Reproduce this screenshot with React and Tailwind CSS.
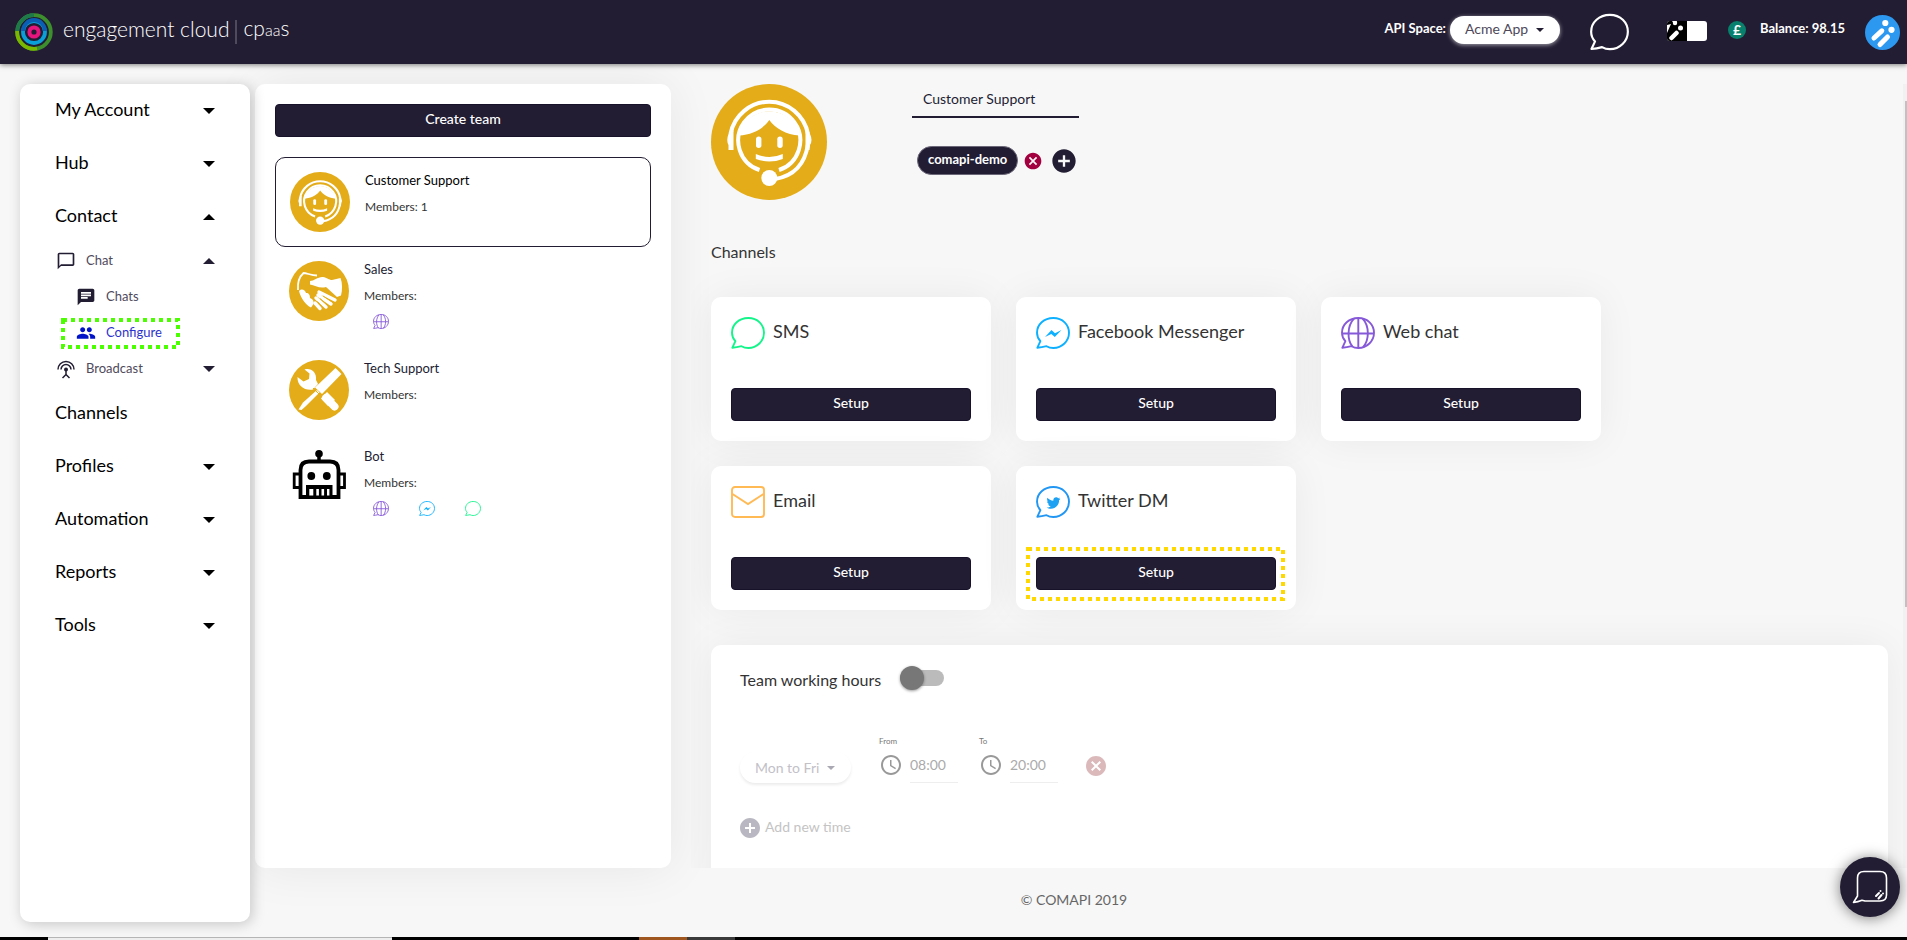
import React, { useState } from 'react'
import clsx from 'clsx'
import { FaTwitter } from 'react-icons/fa'
import {
  MdAccessTime,
  MdAddCircle,
  MdCancel,
  MdChat,
  MdChatBubbleOutline,
  MdPeople,
} from 'react-icons/md'

const BUBBLE =
  'M1.3 30.8 L4.4 24.2 C2.2 21.8 1 19 1 15.7 C1 7.6 8 1 17.3 1 S33 7.6 33 15.8 S26 31 17.3 31 C14.8 31 12.4 30.3 10.5 29.2 C7.5 30 4 30.6 1.3 30.8Z'

const Arrow = ({ up, className }) => (
  <svg viewBox="0 0 12 6" className={className} fill="currentColor" aria-hidden="true">
    <path d={up ? 'M0 6 L6 0 L12 6Z' : 'M0 0 L6 6 L12 0Z'} />
  </svg>
)

// Channel icons
const Bubble = ({ className, children }) => (
  <svg viewBox="0 0 34 32" className={className} fill="none" stroke="currentColor" strokeWidth="1.9" strokeLinejoin="round" aria-hidden="true">
    <path d={BUBBLE} />
    {children}
  </svg>
)

const ChannelIcon = ({ type, size }) => {
  const box = size === 'small' ? 'w-4 h-[15px] shrink-0' : 'w-[34px] h-8 shrink-0'
  if (type === 'sms') return <Bubble className={clsx(box, 'text-[#13f58a]')} />
  if (type === 'facebook') {
    return (
      <Bubble className={clsx(box, 'text-[#0cb0ff]')}>
        <path d="M9 20 L15.5 13 L19 16.2 L25.5 13 L18.8 20 L15.3 17Z" fill="currentColor" stroke="none" />
      </Bubble>
    )
  }
  if (type === 'webchat') {
    return (
      <Bubble className={clsx(box, 'text-[#8659d8]')}>
        <path d="M17.3 1V31M1 16.5H33M13 1.7C6 9 6 23 11.5 29.7M21.6 1.7C28.5 9 28.5 23 22 30.2" />
      </Bubble>
    )
  }
  if (type === 'email') {
    return (
      <svg viewBox="0 0 34 32" className={clsx(box, 'text-[#ffba55]')} fill="none" stroke="currentColor" strokeWidth="1.9" aria-hidden="true">
        <rect x="1" y="1" width="32" height="30" rx="3" />
        <path d="M1.5 8 L17 18 L32.5 8" />
      </svg>
    )
  }
  return (
    <Bubble className={clsx(box, 'text-[#2196f3]')}>
      <FaTwitter x="10.5" y="10" size="14" stroke="none" color="#1da1f2" />
    </Bubble>
  )
}

// Team avatars
const SupportAvatar = ({ className }) => (
  <svg viewBox="0 0 116 116" className={className} aria-hidden="true">
    <circle cx="58" cy="58" r="58" fill="#e3ac18" />
    <g fill="none" stroke="#fff" strokeWidth="4">
      <path d="M19.5 50 A39.5 40 0 0 1 97 50" />
      <path d="M97 60 C94 80 83 92 64 95" />
      <path d="M48.5 86 A31 31 0 1 1 68 86" />
    </g>
    <path d="M28 51.5 C42 51 53 44 58.3 36 C64 44 75 51 88.5 51.5 A31 31 0 0 0 28 51.5Z" fill="#fff" />
    <g fill="#fff">
      <path d="M22.5 66 H17.5 V61 Q15 56.5 17.5 50 Q19 46.5 22.5 46.5Z" />
      <path d="M94.5 66 H98.5 L99 61 Q102 56.5 99 50 Q98 46.5 94.5 46.5Z" />
      <rect x="45" y="52.5" width="5.4" height="11.5" rx="2.7" />
      <rect x="66.3" y="52.5" width="5.4" height="11.5" rx="2.7" />
      <path d="M44.8 70 Q58.3 76 71.8 70 V75 Q58.3 80 44.8 75Z" />
      <circle cx="58.3" cy="94" r="8" />
    </g>
  </svg>
)

const SalesAvatar = ({ className }) => (
  <svg viewBox="0 0 60 60" className={className} aria-hidden="true">
    <circle cx="30" cy="30" r="30" fill="#e3ac18" />
    <path d="M21 20 C25 20 29 15.5 34 16 C38 16.5 40 19 43 19 L51.5 17 C53.5 22 53.5 29 52 34.5 L48 36 L37 26 C31 28 26 24.5 21 23.5Z" fill="#fff" />
    <path d="M9 29 C8.5 23 10 16 14.5 12 C18 12 22 14.5 28 14.5" fill="none" stroke="#fff" strokeWidth="1.8" />
    <path d="M10 30 C13 27 16 29 17 32 C20 32 21 34 21 37 C24 38 25 40 24.5 43 L22 46.5 C17 44 12 38 10 30Z" fill="#fff" />
    <path d="M30 31 L46 39 M29 34 L42 43 M27 37 L37 46 M26 42 L31 47.5" fill="none" stroke="#fff" strokeWidth="3.4" strokeLinecap="round" />
    <path d="M34 35 L45 42 M31 37.5 L40 45.5 M28.5 40.5 L34.5 47.5" fill="none" stroke="#e3ac18" strokeWidth="1" />
  </svg>
)

const TechAvatar = ({ className }) => (
  <svg viewBox="0 0 60 60" className={className} aria-hidden="true">
    <circle cx="30" cy="30" r="30" fill="#e3ac18" />
    <path d="M8.5 17 L14.5 21.5 L20 19 L20.5 13.5 L15.5 9.5 C22 7.5 28 12.5 27 20 L29 24 L24 29.5 C16 31 8 26 8.5 17Z" fill="#fff" />
    <path d="M37 38 L45.5 46.5" stroke="#fff" strokeWidth="8" strokeLinecap="round" />
    <path d="M32 38.5 L38 32 L46 40 L39 46Z" fill="#fff" />
    <path d="M46.5 8 L52.5 14 L33 34 L26 27.5Z" fill="#fff" />
    <path d="M28 30 L30.5 32.5 L17 46 L12.5 50 L9.5 49.5 L14 42.5Z" fill="#fff" />
    <path d="M24 28 L32 36" stroke="#e3ac18" strokeWidth="1" />
  </svg>
)

const BotAvatar = ({ className }) => (
  <svg viewBox="0 0 60 60" className={className} aria-hidden="true">
    <circle cx="30" cy="5.7" r="3.8" />
    <path d="M30 6V14" stroke="#000" strokeWidth="3.5" />
    <path d="M11.5 49 V22 Q11.5 13.5 20 13.5 H41 Q49.5 13.5 49.5 22 V49Z" fill="none" stroke="#000" strokeWidth="3.8" />
    <path d="M10 26 H5.2 V39.5 H10 M51 26 H55.5 V39.5 H51" fill="none" stroke="#000" strokeWidth="2.8" />
    <circle cx="22.3" cy="28" r="3.9" />
    <circle cx="37.8" cy="28" r="3.9" />
    <path d="M17 37H43.5V50H17Z" />
    <path d="M20.3 41h4v6.5h-4zM27.3 41h2.6v6.5h-2.6zM32.5 41h2.6v6.5h-2.6zM38 41h2.4v6.5h-2.4z" fill="#fff" />
  </svg>
)

const Capsules = ({ dot }) => (
  <>
    <path d="M9 23 L16.8 15.8 M15 29.5 L22.5 22" stroke="currentColor" strokeWidth="5" strokeLinecap="round" />
    <circle cx="20.3" cy="8" r={dot} fill="currentColor" />
    <circle cx="26.5" cy="14.8" r={dot} fill="currentColor" />
  </>
)

const BroadcastIcon = () => (
  <svg viewBox="0 0 20 20" className="w-5 h-5" fill="none" stroke="currentColor" strokeWidth="1.5" aria-hidden="true">
    <path d="M2 10.5 A8 8 0 0 1 18 10.5 M5 10.5 A5 5 0 0 1 15 10.5" />
    <circle cx="10" cy="10.5" r="2" fill="currentColor" stroke="none" />
    <path d="M10 12 V16 M6.5 19 L10 15.5 L13.5 19" />
  </svg>
)

// Dotted marker drawn around a control
const Marker = ({ className }) => (
  <svg className={clsx('absolute pointer-events-none overflow-visible', className)} fill="none" stroke="currentColor" strokeWidth="4" strokeDasharray="4 4" aria-hidden="true">
    <rect width="100%" height="100%" />
  </svg>
)

const DarkButton = ({ children }) => (
  <button className="w-full h-[33px] pb-1 rounded bg-[#231d33] border border-[#17112a] text-white text-sm font-medium">
    {children}
  </button>
)

const Header = () => (
  <header className="relative z-20 flex items-center h-16 pl-[15px] pr-[7px] shrink-0 bg-[#231d33] text-white shadow-[0_1px_5px_rgba(0,0,0,0.5)]">
    <svg viewBox="0 0 38 38" className="w-[38px] h-[38px]" fill="none" aria-hidden="true">
      <circle cx="19" cy="19" r="16.8" stroke="#3c8f2c" strokeWidth="3.8" />
      <path d="M2.2 18 A16.8 16.8 0 0 1 19 2.2" stroke="#1f7a4a" strokeWidth="3.8" />
      <path d="M2.2 18 A16.8 16.8 0 0 0 22 35.5" stroke="#7ab800" strokeWidth="3.8" />
      <circle cx="19" cy="19" r="11" stroke="#0a9fd8" strokeWidth="3.8" />
      <path d="M8 18 A11 11 0 0 1 30 18" stroke="#0a5fb4" strokeWidth="3.8" />
      <circle cx="19" cy="19" r="4.6" stroke="#e6147d" strokeWidth="4" />
    </svg>
    <h1 className="flex items-center ml-[10px] text-[21px] leading-6 font-light">
      <span className="pb-[6px]">engagement cloud</span>
      <span className="w-[2px] h-6 mx-[6px] bg-[#4f4a5c]" />
      <span className="pb-[6px]">cp<span className="text-base">aa</span>s</span>
    </h1>
    <div className="flex items-center ml-auto text-[13px] font-bold">
      <label htmlFor="api-space" className="pb-[6px]">API Space:</label>
      <div className="relative ml-1 mb-1">
        <select id="api-space" className="appearance-none w-[110px] h-7 pl-[15px] pb-[2px] rounded-full bg-white text-[#4d485a] text-sm font-normal shadow-[0_1px_4px_rgba(255,255,255,0.6)]">
          <option>Acme App</option>
        </select>
        <Arrow className="absolute right-4 top-3 w-2 h-1 text-[#231d33] pointer-events-none" />
      </div>
      <button aria-label="Messages" className="ml-[30px]"><Bubble className="w-[39px] h-[38px]" /></button>
      <svg viewBox="0 0 40 20" className="w-10 h-5 ml-[38px] mb-[2px]" aria-hidden="true">
        <rect width="40" height="20" rx="3" fill="#fff" />
        <path d="M3 0H20V20H3Q0 20 0 17V3Q0 0 3 0Z" fill="#000" />
        <path d="M4.5 17 L9.5 12" stroke="#fff" strokeWidth="4.5" strokeLinecap="round" />
        <path d="M0 4 L4 3 L0 12Z M5 0H10L8 4Z" fill="#fff" />
        <circle cx="8" cy="2" r="2.2" fill="#fff" />
        <circle cx="13.5" cy="7" r="2.5" fill="#fff" />
      </svg>
      <span className="flex items-center justify-center w-[18px] h-[18px] ml-[21px] mb-1 rounded-full bg-[#07806d] text-sm">£</span>
      <span className="ml-[14px] pb-[6px]">Balance: 98.15</span>
      <button aria-label="Profile" className="ml-5">
        <svg viewBox="0 0 35 35" className="w-[35px] h-[35px]" fill="none" aria-hidden="true">
          <circle cx="17.5" cy="17.5" r="17.5" fill="#2c98f0" />
          <Capsules dot="3.1" />
        </svg>
      </button>
    </div>
  </header>
)

const NavItem = ({ label, arrow = 'down' }) => (
  <li>
    <a href="#" className="flex items-center justify-between h-[53px] pl-[35px] pr-[35px] text-lg text-black">
      <span className="pb-[3px]">{label}</span>
      {arrow !== 'none' && <Arrow up={arrow === 'up'} className="w-3 h-[6px]" />}
    </a>
  </li>
)

const SubItem = ({ label, icon, arrow }) => (
  <li>
    <a href="#" className="flex items-center h-9 pl-9 pr-[35px] text-[13px] text-[#4f4a5c]">
      <span className="text-[#231d33]">{icon}</span>
      <span className="ml-[10px]">{label}</span>
      {arrow && <Arrow up={arrow === 'up'} className="w-3 h-[6px] ml-auto text-[#231d33]" />}
    </a>
  </li>
)

const Sidebar = () => (
  <nav className="relative z-10 w-[230px] shrink-0 rounded-[10px] bg-white shadow-[2px_2px_14px_rgba(0,0,0,0.2)]">
    <ul>
      <NavItem label="My Account" />
      <NavItem label="Hub" />
      <NavItem label="Contact" arrow="up" />
      <SubItem label="Chat" arrow="up" icon={<MdChatBubbleOutline className="w-5 h-5" />} />
      <li>
        <a href="#" className="flex items-center h-9 pl-14 text-[13px] text-[#4f4a5c]">
          <MdChat className="w-5 h-5 text-[#231d33]" />
          <span className="ml-[10px]">Chats</span>
        </a>
      </li>
      <li className="relative">
        <a href="#" className="flex items-center h-9 pl-14 text-[13px] text-[#2d33cc]">
          <MdPeople className="w-5 h-5 text-[#0013c8]" />
          <span className="ml-[10px]">Configure</span>
        </a>
        <Marker className="left-[43px] top-[5px] w-[115px] h-[27px] text-[#4cff00]" />
      </li>
      <SubItem label="Broadcast" arrow="down" icon={<BroadcastIcon />} />
      <NavItem label="Channels" arrow="none" />
      <NavItem label="Profiles" />
      <NavItem label="Automation" />
      <NavItem label="Reports" />
      <NavItem label="Tools" />
    </ul>
  </nav>
)

const teams = [
  { name: 'Customer Support', members: 1, avatar: SupportAvatar, channels: [] },
  { name: 'Sales', avatar: SalesAvatar, channels: ['webchat'] },
  { name: 'Tech Support', avatar: TechAvatar, channels: [] },
  { name: 'Bot', avatar: BotAvatar, channels: ['webchat', 'facebook', 'sms'] },
]

const TeamList = () => {
  const [selected, setSelected] = useState('Customer Support')

  return (
    <section className="w-[416px] shrink-0 p-5 rounded-[10px] bg-white shadow-[0_0_50px_rgba(0,0,0,0.07)]">
      <DarkButton>Create team</DarkButton>
      <ul className="mt-5">
        {teams.map(({ name, members, avatar: Avatar, channels }) => (
          <li key={name}>
            <button
              onClick={() => setSelected(name)}
              className={clsx(
                'flex items-start w-full p-[14px] text-left',
                name === selected && 'border border-[#231d33] rounded-[10px]'
              )}
            >
              <Avatar className="w-[60px] h-[60px] shrink-0" />
              <span className="ml-[15px] text-[#333]">
                <span className={clsx('block text-[13px] leading-4', name === selected ? 'text-black' : 'text-[#231d33]')}>{name}</span>
                <span className="block mt-[10px] text-xs leading-[18px]">Members: {members}</span>
                {channels.length > 0 && (
                  <span className="flex gap-[30px] pl-[9px] pt-[9px] pb-[3px]">
                    {channels.map((c) => <ChannelIcon key={c} type={c} size="small" />)}
                  </span>
                )}
              </span>
            </button>
          </li>
        ))}
      </ul>
    </section>
  )
}

const channels = [
  { type: 'sms', name: 'SMS' },
  { type: 'facebook', name: 'Facebook Messenger' },
  { type: 'webchat', name: 'Web chat' },
  { type: 'email', name: 'Email' },
  { type: 'twitter', name: 'Twitter DM', marked: true },
]

const ChannelCard = ({ type, name, marked }) => (
  <article className="w-[280px] p-5 rounded-[10px] bg-white shadow-[0_0_40px_rgba(0,0,0,0.06)]">
    <h3 className="flex items-center gap-2 h-8 text-lg leading-7 text-[#333]">
      <ChannelIcon type={type} />
      <span className="pb-1">{name}</span>
    </h3>
    <div className="relative mt-[39px]">
      <DarkButton>Setup</DarkButton>
      {marked && <Marker className="-left-2 -top-2 w-[255px] h-[50px] text-[#ffd800]" />}
    </div>
  </article>
)

const TimeField = ({ label, id, value }) => (
  <div className="w-[100px]">
    <label htmlFor={id} className="block text-[8px] leading-3 text-[#777]">{label}</label>
    <div className="flex items-start mt-[6px] text-[#999]">
      <MdAccessTime className="w-6 h-6" />
      <input id={id} defaultValue={value} className="w-12 h-[30px] ml-[7px] pb-[7px] border-b border-[#eee] text-sm text-[#aaa] outline-none" />
    </div>
  </div>
)

const WorkingHours = () => {
  const [enabled, setEnabled] = useState(false)

  return (
    <section className="mt-[35px] h-[300px] px-[29px] pt-[21px] rounded-[10px] bg-white shadow-[0_0_40px_rgba(0,0,0,0.06)]">
      <label className="flex items-start text-base leading-7 text-[#333]">
        Team working hours
        <input type="checkbox" role="switch" checked={enabled} onChange={() => setEnabled(!enabled)} className="peer sr-only" />
        <span className="flex items-center w-11 h-4 mt-1 ml-[19px] rounded-full bg-[#bbb] peer-checked:justify-end">
          <span className="w-6 h-6 rounded-full bg-[#777] shadow-[0_1px_3px_rgba(0,0,0,0.4)]" />
        </span>
      </label>
      <div className="flex items-start mt-[41px]">
        <div className="relative mt-[17px]">
          <select aria-label="Days" className="appearance-none w-[111px] h-[31px] pl-[15px] rounded-full bg-white text-sm text-[#c2c1c8] shadow-[0_2px_3px_rgba(0,0,0,0.08)]">
            <option>Mon to Fri</option>
          </select>
          <Arrow className="absolute right-4 top-[14px] w-2 h-1 text-[#aaa8b2] pointer-events-none" />
        </div>
        <div className="flex ml-7">
          <TimeField label="From" id="from" value="08:00" />
          <TimeField label="To" id="to" value="20:00" />
        </div>
        <button aria-label="Remove time" className="mt-[19px] ml-[5px] text-[#dbb9bb]"><MdCancel className="w-6 h-6" /></button>
      </div>
      <button className="flex items-center gap-[3px] mt-[33px] -ml-[2px] text-sm text-[#c4c4c4]">
        <MdAddCircle className="w-6 h-6 text-[#b9b7c1]" />
        <span className="pb-[2px]">Add new time</span>
      </button>
    </section>
  )
}

const TeamDetails = () => (
  <main className="flex flex-1 min-w-0 ml-5 overflow-hidden">
    <div className="flex-1 min-w-0 pl-5 pr-[15px]">
      <div className="flex items-start">
        <SupportAvatar className="w-[116px] h-[116px]" />
        <div className="ml-[85px]">
          <input aria-label="Team name" defaultValue="Customer Support" className="block w-[167px] h-[34px] pl-[11px] pb-1 border-b-2 border-[#231d33] text-sm text-[#231d33] outline-none" />
          <div className="flex items-center mt-7 ml-[5px]">
            <span className="h-[29px] px-[10px] rounded-full border border-[#6b6678] bg-[#231d33] text-white text-[13px] leading-[25px] font-bold">comapi-demo</span>
            <button aria-label="Remove member" className="ml-[5px] text-[#a3003f]"><MdCancel className="w-5 h-5" /></button>
            <button aria-label="Add member" className="ml-[7px] text-[#231d33]"><MdAddCircle className="w-7 h-7" /></button>
          </div>
        </div>
      </div>
      <h2 className="mt-10 text-base leading-6 text-[#333]">Channels</h2>
      <div className="flex flex-wrap gap-[25px] mt-[33px]">
        {channels.map((c) => <ChannelCard key={c.type} {...c} />)}
      </div>
      <WorkingHours />
    </div>
    {/* Scroll bar */}
    <div className="w-1 shrink-0 pt-[17px] pl-[2px] bg-[#f1f1f1]">
      <div className="h-[66%] bg-[#c1c1c1]" />
    </div>
  </main>
)

export default function App() {
  return (
    <div className="flex flex-col h-screen bg-[#f7f7f7] font-['Lato',sans-serif]">
      <Header />
      <div className="flex flex-1 min-h-0 pt-5 pl-5">
        <div className="flex pb-[15px]"><Sidebar /></div>
        <div className="flex flex-col flex-1 min-w-0 ml-[5px]">
          <div className="flex flex-1 min-h-0">
            <TeamList />
            <TeamDetails />
          </div>
          <footer className="h-[69px] pt-5 pr-[14px] text-center text-sm leading-6 text-[#666]">© COMAPI 2019</footer>
        </div>
      </div>
      <div className="flex h-[3px] shrink-0 bg-black">
        <div className="w-[344px] ml-12 border-t border-[#b5b5b5] bg-[#eee]" />
        <div className="w-12 ml-[247px] bg-[#a0561f]" />
        <div className="w-12 bg-[#3a3a3a]" />
      </div>
      <button aria-label="Open chat" className="fixed right-[7px] bottom-[23px] z-30 flex items-center justify-center w-[60px] h-[60px] rounded-full bg-[#231d33] text-white shadow-[0_1px_14px_rgba(0,0,0,0.5)]">
        <svg viewBox="0 0 36 34" className="w-9 h-[34px]" fill="none" aria-hidden="true">
          <path d="M1.5 32.5 L5.5 26 V8 Q5.5 1.5 12 1.5 H28 Q34.5 1.5 34.5 8 V25 Q34.5 31 28 31 H13 L10 30.3 Q6 32 1.5 32.5Z" stroke="currentColor" strokeWidth="1.6" strokeLinejoin="round" />
          <path d="M24 26 L27 23 M26.5 28.5 L29.5 25" stroke="currentColor" strokeWidth="2" strokeLinecap="round" />
          <circle cx="28.5" cy="21" r="1" fill="currentColor" />
          <circle cx="31" cy="23.5" r="1" fill="currentColor" />
        </svg>
      </button>
    </div>
  )
}
